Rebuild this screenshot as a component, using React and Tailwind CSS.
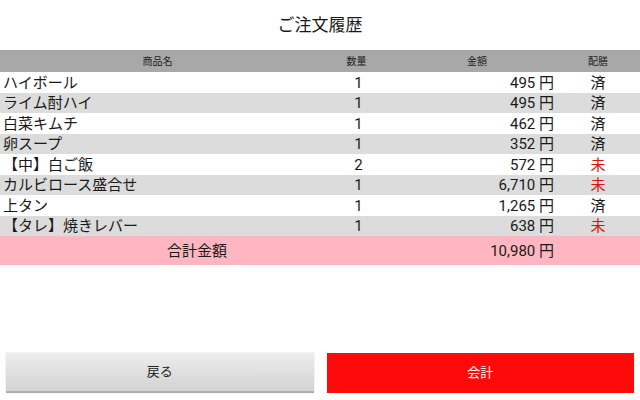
const ITEMS = [
  { name: 'ハイボール', qty: 1, price: '495', served: true },
  { name: 'ライム酎ハイ', qty: 1, price: '495', served: true },
  { name: '白菜キムチ', qty: 1, price: '462', served: true },
  { name: '卵スープ', qty: 1, price: '352', served: true },
  { name: '【中】白ご飯', qty: 2, price: '572', served: false },
  { name: 'カルビロース盛合せ', qty: 1, price: '6,710', served: false },
  { name: '上タン', qty: 1, price: '1,265', served: true },
  { name: '【タレ】焼きレバー', qty: 1, price: '638', served: false },
]

const FONT = "font-['Roboto','Noto_Sans_CJK_JP',sans-serif]"

export default function App() {
  return (
    <div className={`w-[640px] h-[400px] bg-white flex flex-col text-[#1a1a1a] ${FONT}`}>
      {/* Title */}
      <div className="h-[50px] flex items-center justify-center text-[17px] pt-[1px]">
        ご注文履歴
      </div>

      {/* Header */}
      <div className="h-[22px] bg-[#a8a8a8] flex items-center text-[10px] text-[#222]">
        <div className="w-[315px] text-center">商品名</div>
        <div className="w-[83px] text-center">数量</div>
        <div className="w-[158px] text-center">金額</div>
        <div className="flex-1 text-center">配膳</div>
      </div>

      {/* Rows */}
      {ITEMS.map((item, i) => (
        <div
          key={i}
          className={`h-[20.5px] flex items-center pt-[2px] text-[15px] leading-none ${i % 2 ? 'bg-[#dcdcdc]' : 'bg-white'}`}
        >
          <div className="w-[315px] pl-[3px] whitespace-nowrap">{item.name}</div>
          <div className="w-[83px] text-center pl-[4px]">{item.qty}</div>
          <div className="w-[158px] text-right pr-[2px]">{item.price} 円</div>
          <div className={`flex-1 text-center ${item.served ? '' : 'text-[#e01010]'}`}>
            {item.served ? '済' : '未'}
          </div>
        </div>
      ))}

      {/* Total */}
      <div className="h-[29px] bg-[#ffb6c1] flex items-center pt-[1px] text-[15px]">
        <div className="w-[398px] text-center pr-[4px]">合計金額</div>
        <div className="w-[158px] text-right pr-[2px]">10,980 円</div>
        <div className="flex-1" />
      </div>

      <div className="flex-1" />

      {/* Buttons */}
      <div className="flex gap-[13px] px-[6px] pb-[7px]">
        <button className="flex-1 h-[40px] bg-gradient-to-b from-[#ededed] to-[#d3d3d3] border-b-2 border-[#b0b0b0] shadow-[0_0_1px_rgba(0,0,0,0.25)] text-[13px] text-[#222]">
          戻る
        </button>
        <button className="flex-1 h-[40px] bg-[#ff0a0a] text-[13px] text-white">
          会計
        </button>
      </div>
    </div>
  )
}
